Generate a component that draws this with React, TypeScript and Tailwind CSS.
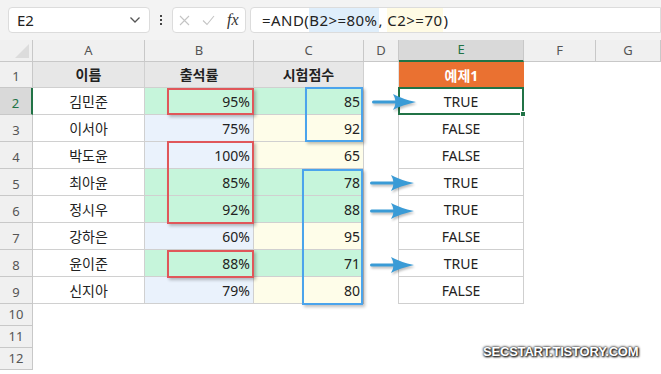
import React from "react";

const cols = ["A", "B", "C", "D", "E", "F", "G"];

type Row = { name: string; rate: string; score: string; result: string; hit: boolean };

const rows: Row[] = [
  { name: "김민준", rate: "95%", score: "85", result: "TRUE", hit: true },
  { name: "이서아", rate: "75%", score: "92", result: "FALSE", hit: false },
  { name: "박도윤", rate: "100%", score: "65", result: "FALSE", hit: false },
  { name: "최아윤", rate: "85%", score: "78", result: "TRUE", hit: true },
  { name: "정시우", rate: "92%", score: "88", result: "TRUE", hit: true },
  { name: "강하은", rate: "60%", score: "95", result: "FALSE", hit: false },
  { name: "윤이준", rate: "88%", score: "71", result: "TRUE", hit: true },
  { name: "신지아", rate: "79%", score: "80", result: "FALSE", hit: false },
];

const font = { fontFamily: '"Noto Sans", "Noto Sans CJK KR", sans-serif' };

function Arrow({ top, left }: { top: number; left: number }) {
  return (
    <svg
      className="absolute drop-shadow-[1px_2px_1px_rgba(0,0,0,0.25)]"
      style={{ top, left }}
      width="46"
      height="18"
      viewBox="0 0 46 18"
    >
      <rect x="0" y="7.5" width="26" height="3" rx="1.5" fill="#3a9bd6" />
      <path d="M21 1 Q30 6 44 9 Q30 12 21 17 Q26 9 21 1 Z" fill="#3a9bd6" />
    </svg>
  );
}

function Box({ top, left, w, h, color }: { top: number; left: number; w: number; h: number; color: string }) {
  return (
    <div
      className={`absolute border-2 ${color} shadow-[2px_2px_3px_rgba(0,0,0,0.25)]`}
      style={{ top, left, width: w, height: h }}
    />
  );
}

export default function App() {
  return (
    <div className="relative w-[661px] h-[374px] overflow-hidden bg-white text-[#222]" style={font}>
      {/* formula bar */}
      <div className="flex items-center h-10 bg-[#f3f3f3] px-2 gap-1">
        <div className="flex items-center justify-between w-[142px] h-[26px] bg-white border border-[#dcdcdc] rounded px-2 text-[15px]">
          <span>E2</span>
          <svg width="12" height="8" viewBox="0 0 12 8">
            <path d="M1.5 1.5 L6 6 L10.5 1.5" fill="none" stroke="#555" strokeWidth="1.3" />
          </svg>
        </div>
        <div className="flex flex-col gap-[2px] px-[6px]">
          <span className="w-[2px] h-[2px] bg-[#444]" />
          <span className="w-[2px] h-[2px] bg-[#444]" />
          <span className="w-[2px] h-[2px] bg-[#444]" />
        </div>
        <div className="flex items-center gap-3 w-[74px] h-[26px] bg-white border border-[#dcdcdc] rounded px-[6px]">
          <svg width="11" height="11" viewBox="0 0 11 11">
            <path d="M1 1 L10 10 M10 1 L1 10" stroke="#c4c4c4" strokeWidth="1.1" />
          </svg>
          <svg width="13" height="11" viewBox="0 0 13 11">
            <path d="M1 5.5 L5 9.5 L12 1" fill="none" stroke="#c4c4c4" strokeWidth="1.1" />
          </svg>
          <span className="italic text-[16px] leading-none text-[#333]" style={{ fontFamily: '"Liberation Serif", serif' }}>
            fx
          </span>
        </div>
        <div className="flex items-stretch flex-1 h-[26px] bg-white border border-[#dcdcdc] rounded-l pl-[11px] text-[15px] tracking-[0.45px] mr-[-8px]">
          <span className="flex items-center">=AND(</span>
          <span className="flex items-center bg-[#dfeefb] pr-[1px]">B2&gt;=80%</span>
          <span className="flex items-center whitespace-pre">, </span>
          <span className="flex items-center bg-[#fffbe4] pr-[1px]">C2&gt;=70</span>
          <span className="flex items-center">)</span>
        </div>
      </div>

      {/* sheet */}
      <div className="grid grid-cols-[33px_112px_109px_110px_35px_125px_72px_1fr] grid-rows-[22px_26px_repeat(8,27px)_repeat(3,22px)] text-[14px]">
        {/* column headers */}
        <div className="relative bg-[#f0f0f0] border-r border-b border-[#c8c8c8]">
          <div className="absolute right-[3px] bottom-[3px] w-0 h-0 border-l-[14px] border-l-transparent border-b-[14px] border-b-[#dcdcdc]" />
        </div>
        {cols.map((c) => (
          <div
            key={c}
            className={
              c === "E"
                ? "flex items-center justify-center bg-[#d9d9d9] border-r border-[#c8c8c8] border-b-2 border-b-[#217346] text-[13px] text-[#217346]"
                : "flex items-center justify-center bg-[#f0f0f0] border-r border-b border-[#c8c8c8] text-[13px] text-[#555]"
            }
          >
            {c}
          </div>
        ))}

        {/* row 1 */}
        <div className="flex items-end justify-center pb-[1px] bg-[#f0f0f0] border-r border-b border-[#c8c8c8] text-[13px] text-[#555]">1</div>
        <div className="flex items-center justify-center bg-[#e7e7e7] border-r border-b border-[#d0d0d0] font-bold">이름</div>
        <div className="flex items-center justify-center bg-[#e7e7e7] border-r border-b border-[#d0d0d0] font-bold">출석률</div>
        <div className="flex items-center justify-center bg-[#e7e7e7] border-r border-b border-[#d0d0d0] font-bold">시험점수</div>
        <div className="border-r border-[#e2e2e2]" />
        <div className="flex items-center justify-center bg-[#ea7131] text-white font-bold">예제1</div>
        <div />
        <div />

        {rows.map((r, i) => {
          const n = i + 2;
          return (
            <React.Fragment key={n}>
              <div
                className={
                  n === 2
                    ? "flex items-end justify-center pb-[1px] bg-[#d9d9d9] border-r-2 border-r-[#217346] border-b border-[#c8c8c8] text-[13px] text-[#217346]"
                    : "flex items-end justify-center pb-[1px] bg-[#f0f0f0] border-r border-b border-[#c8c8c8] text-[13px] text-[#555]"
                }
              >
                {n}
              </div>
              <div className="flex items-center justify-center border-r border-b border-[#d0d0d0]">{r.name}</div>
              <div
                className={`flex items-center justify-end pr-[3px] border-r border-b border-[#d0d0d0] ${
                  r.hit ? "bg-[#c6f5db]" : "bg-[#eaf2fc]"
                }`}
              >
                {r.rate}
              </div>
              <div
                className={`flex items-center justify-end pr-[3px] border-r border-b border-[#d0d0d0] ${
                  r.hit ? "bg-[#c6f5db]" : "bg-[#fefde9]"
                }`}
              >
                {r.score}
              </div>
              <div className="border-r border-[#d0d0d0]" />
              <div
                className={
                  n === 2
                    ? "relative flex items-center justify-center border-2 border-[#217346] -mt-[1px] -ml-[1px]"
                    : "flex items-center justify-center border-r border-b border-[#cfcfcf]"
                }
              >
                {r.result}
                {n === 2 && (
                  <div className="absolute -right-[4px] -bottom-[4px] w-[6px] h-[6px] bg-[#217346] border border-white" />
                )}
              </div>
              <div />
              <div />
            </React.Fragment>
          );
        })}

        {[10, 11, 12].map((n) => (
          <React.Fragment key={n}>
            <div className="flex items-end justify-center pb-[1px] bg-[#f0f0f0] border-r border-b border-[#c8c8c8] text-[13px] text-[#555]">
              {n}
            </div>
            <div className="col-span-7" />
          </React.Fragment>
        ))}
      </div>

      {/* highlight boxes */}
      <Box top={88} left={167} w={87} h={27} color="border-[#e0575a]" />
      <Box top={141} left={167} w={87} h={83} color="border-[#e0575a]" />
      <Box top={250} left={167} w={87} h={28} color="border-[#e0575a]" />
      <Box top={87} left={305} w={58} h={55} color="border-[#4ba4ec]" />
      <Box top={169} left={302} w={61} h={136} color="border-[#4ba4ec]" />

      {/* arrows */}
      <Arrow top={93} left={372} />
      <Arrow top={174} left={370} />
      <Arrow top={202} left={370} />
      <Arrow top={256} left={370} />

      {/* watermark */}
      <div
        className="absolute left-[483px] top-[342px] text-white font-bold text-[13px] tracking-[-0.2px]"
        style={{
          fontFamily: '"Liberation Sans", Arial, sans-serif',
          textShadow: "0 0 2px #222, 0 0 3px #222, 1px 1px 2px #000",
        }}
      >
        SECSTART.TISTORY.COM
      </div>
    </div>
  );
}
